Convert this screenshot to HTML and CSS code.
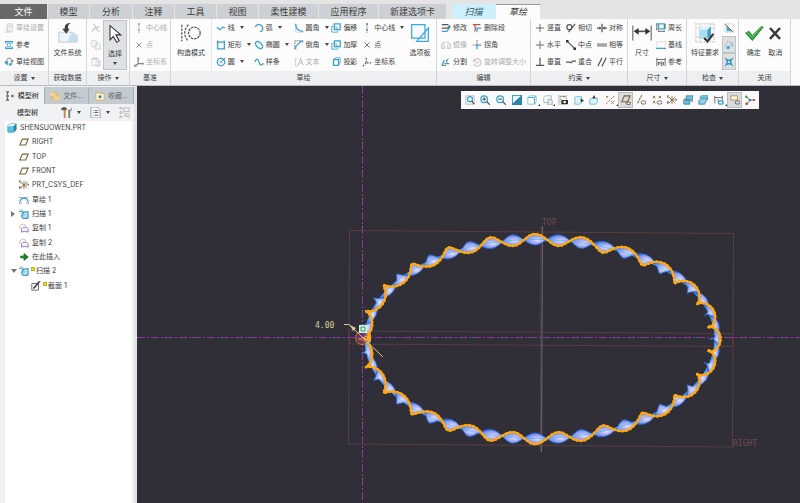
FILE: index.html
```html
<!DOCTYPE html>
<html lang="zh-CN">
<head>
<meta charset="utf-8">
<title>SHENSUOWEN.PRT</title>
<link rel="stylesheet" href="styles.css">
</head>
<body>
<svg class="defs" aria-hidden="true">
  <symbol id="gear-doc" viewBox="0 0 12 12"><path class="g" d="M4 1h6v9H4zM5 3h4M5 5h4"/><path class="g" d="M1 7l3 3 3-3M1 11h7"/></symbol>
  <symbol id="ref" viewBox="0 0 12 12"><path class="b w2" d="M2 4V2h8v2M2 8v2h8V8"/><path class="b" d="M4 4h4v4H4z"/></symbol>
  <symbol id="sketchview" viewBox="0 0 12 12"><path class="fb" d="M1 5l4-1v6l-4-2zM6 8l4-2v3l-4 2z"/><path class="k" d="M3 3c3-3 7-1 7 2M8 4l2 2 1-2"/></symbol>
  <symbol id="cut" viewBox="0 0 12 12"><path class="g w2" d="M3 1l5 8M10 4L2 8"/><circle class="g" cx="9" cy="10" r="1"/><circle class="g" cx="2" cy="9" r="1"/></symbol>
  <symbol id="copy" viewBox="0 0 12 12"><path class="g" d="M1 1h5l1 1v6H1zM5 4h4l2 2v5H5z"/></symbol>
  <symbol id="paste" viewBox="0 0 12 12"><path class="g" d="M1 2h8v8H1zM3 1h4v2H3zM6 5h5v6H6z"/></symbol>
  <symbol id="cl" viewBox="0 0 12 12"><path class="k w2" stroke-dasharray="3 1.500 1 1.500" d="M6 0v12"/></symbol>
  <symbol id="pt" viewBox="0 0 12 12"><path class="k" d="M3 3l6 6M9 3l-6 6"/></symbol>
  <symbol id="csys" viewBox="0 0 12 12"><path class="k w2" d="M5 1v7h6M5 8l-4 3M4 2l1-1 1 1M10 7l1 1-1 1M1 9v2h2"/></symbol>
  <symbol id="csysd" viewBox="0 0 12 12"><path class="k w2" stroke-dasharray="2 1.500" d="M5 1v6h6M5 7l-4 4"/></symbol>
  <symbol id="line" viewBox="0 0 12 12"><path class="b w2" d="M1 5l4 3 3-3 3 1"/></symbol>
  <symbol id="rect" viewBox="0 0 12 12"><path class="b w2" d="M2 2.500h8v8H2z"/><path class="k" d="M1 1.500h2M9 1.500h2"/></symbol>
  <symbol id="circ" viewBox="0 0 12 12"><circle class="b w2" cx="6" cy="6" r="4.500"/><circle class="b" cx="6" cy="6" r="1"/><path class="k" d="M7 5l4-4"/></symbol>
  <symbol id="arc" viewBox="0 0 12 12"><path class="b w2" d="M2 3c6-3 11 2 7 7"/><path class="k" d="M1 4h2M7 10h2"/></symbol>
  <symbol id="ellipse" viewBox="0 0 12 12"><ellipse class="b w2" cx="6" cy="6" rx="5" ry="3" transform="rotate(45 6 6)"/></symbol>
  <symbol id="spline" viewBox="0 0 12 12"><path class="b w2" d="M1 6c2-5 4-4 5 0s4 5 5 1"/></symbol>
  <symbol id="fillet" viewBox="0 0 12 12"><path class="g" stroke-dasharray="2 1" d="M2 1v10h9"/><path class="b w2" d="M2 1c0 6 3 9 9 9"/></symbol>
  <symbol id="chamfer" viewBox="0 0 12 12"><path class="k" stroke-dasharray="2 1" d="M1 11V1h10"/><path class="b w2" d="M2 11V8l6-6h3"/></symbol>
  <symbol id="text" viewBox="0 0 12 12"><path class="g" d="M2 2v9h3M4 2h-3"/><path class="g w2" d="M5 10l3-8 3 8M6 7h4"/></symbol>
  <symbol id="offset" viewBox="0 0 12 12"><path class="b w2" d="M4 1h7v7H4z"/><path class="b" d="M3 4H1v7h7V9M6 4v2h2"/></symbol>
  <symbol id="project" viewBox="0 0 12 12"><path class="b w2" d="M3 3h6v7H3z"/><path class="b" d="M3 3l2-2h6v6L9 10"/></symbol>
  <symbol id="modify" viewBox="0 0 12 12"><path class="k w2" d="M1 2h8M1 6h7l3-3"/><path class="b w2" d="M1 10h6l4-5"/></symbol>
  <symbol id="mirror" viewBox="0 0 12 12"><path class="g w2" d="M5 2L1 5v5h3V6M7 2l4 3v5H8V6"/></symbol>
  <symbol id="split" viewBox="0 0 12 12"><path class="b w2" d="M1 10l3-6M4 8h6"/><path class="k" d="M1 10h5M6 5l3-3M7 4v3"/></symbol>
  <symbol id="delseg" viewBox="0 0 12 12"><path class="r w2" d="M1 2h9M4 1C1 5 7 5 3 10"/><path class="b w2" d="M6 11V6h5"/></symbol>
  <symbol id="corner" viewBox="0 0 12 12"><path class="b w2" d="M6 11V6h5"/><path class="k" stroke-dasharray="2 1" d="M6 0v6H0"/></symbol>
  <symbol id="rotate" viewBox="0 0 12 12"><path class="g w2" d="M2 2v3h3M2 5a4.500 4.500 0 1 1 0 3M5 8l3-3"/></symbol>
  <symbol id="plus" viewBox="0 0 12 12"><path class="k" d="M6 1v10M1 6h10"/></symbol>
  <symbol id="perp" viewBox="0 0 12 12"><path class="k w2" d="M1 10h10M6 1v9"/></symbol>
  <symbol id="tangent" viewBox="0 0 12 12"><circle class="k w2" cx="4" cy="5" r="3"/><path class="k w2" d="M3 11l8-10"/></symbol>
  <symbol id="midpt" viewBox="0 0 12 12"><path class="k w2" d="M1 1l10 10"/><path class="fk" d="M0 0h3v3H0zM9 9h3v3H9z"/></symbol>
  <symbol id="coin" viewBox="0 0 12 12"><path class="k w2" d="M0 6h4l2 1 2-2h4"/></symbol>
  <symbol id="symm" viewBox="0 0 12 12"><path class="k w2" d="M6 1v10M0 6h4M8 6h4"/><path class="fk" d="M3 4l2 2-2 2zM9 4L7 6l2 2z"/></symbol>
  <symbol id="equal" viewBox="0 0 12 12"><path d="M0 4h12v4H0z" fill="#999"/><path class="g" d="M0 6h12"/></symbol>
  <symbol id="para" viewBox="0 0 12 12"><path class="k w2" d="M1 11L6 1M6 11l5-10"/></symbol>
  <symbol id="perim" viewBox="0 0 12 12"><path class="b w2" d="M3 1h7v6H3z"/><path class="k" d="M1 1v7M0 1h2M0 8h2M3 10h7M3 9v2M10 9v2M11 1v6"/></symbol>
  <symbol id="base" viewBox="0 0 12 12"><path class="g" stroke-dasharray="1 1" d="M1 8V2h10v6"/><path class="b w2" d="M0 10h12"/></symbol>
  <symbol id="refdim" viewBox="0 0 12 12"><path class="k" d="M1 1v10M11 1v10M1 3h10M3 6v4M3 6h1v2M6 6h2M6 6v4h2M6 8h2M9 6v4"/></symbol>
  <symbol id="chk1" viewBox="0 0 12 12"><path class="g" stroke-dasharray="1 1" d="M1 1h10v10H1z"/><path class="fb" d="M3 3v7h7z"/><path class="k" d="M1 1l10 10"/></symbol>
  <symbol id="chk2" viewBox="0 0 12 12"><path class="k" stroke-dasharray="1 2" d="M1 7l3-5 6 1 1 5"/><circle cx="5" cy="9" r="2" fill="#39a9d6"/><circle cx="9" cy="6" r="1.500" fill="#7cc6e4"/></symbol>
  <symbol id="chk3" viewBox="0 0 12 12"><path class="k" d="M1 1l3 3M11 1L8 4M1 11l3-3M11 11L8 8"/><path d="M3 3l3 1 3-1-1 3 1 3-3-1-3 1 1-3z" fill="#a9dcf3" stroke="#2b8fbb" stroke-width="1.500"/></symbol>
  <symbol id="doc-in" viewBox="0 0 24 24"><path d="M1 11h16l6 4v8H1z" fill="#eef5fa" stroke="#b9c3cb"/><path d="M17 11l6 6v6H11z" fill="#c5deee"/><path d="M15 0c-6 0-7 3-7 7H5l5 6 4-6h-2c0-3 0-5 3-7z" fill="#3d4145"/></symbol>
  <symbol id="cursor" viewBox="0 0 24 24"><path d="M6 2v17l4-4 4 7 3-2-4-7h6z" fill="#fff" stroke="#333" stroke-width="1.300"/></symbol>
  <symbol id="constr" viewBox="0 0 24 24"><path class="k" stroke-width="1.500" stroke-dasharray="3 1.500" d="M1 2v20M9 2c-6 6-6 14 0 20"/><circle class="k" stroke-width="1.500" stroke-dasharray="3 1" cx="16" cy="12" r="7"/></symbol>
  <symbol id="palette" viewBox="0 0 24 24"><path d="M2 2h16v16H2zM22 6v16H8z" fill="#f5fbfe" stroke="#41a8dc" stroke-width="1.500"/></symbol>
  <symbol id="dim" viewBox="0 0 24 24"><path class="k" stroke-width="1.200" d="M1 3v18M23 3v18"/><path class="k" stroke-width="2" d="M4 10h16"/><path class="fk" d="M2 10l6-4v8zM22 10l-6-4v8z"/></symbol>
  <symbol id="feature" viewBox="0 0 24 24"><path class="g" stroke-dasharray="1 1.500" stroke-width="1.500" d="M1 1h22v22H1zM1 6h22M6 1v22M1 17h22M18 1v22"/><path d="M5 8l4-4h10v11l-4 4H5z" fill="#a9dcf3"/><path d="M15 8v11l4-4V4z" fill="#3e9cc6"/><path d="M5 8l4-4h10l-4 4z" fill="#e4f7ff"/><path d="M11 18l4 4 7-9" fill="none" stroke="#333" stroke-width="2.500"/></symbol>
  <symbol id="ok" viewBox="0 0 24 24"><path d="M2 12l4-2 4 5L21 4l2 1-13 16z" fill="#2fa34a" stroke="#1f7b35"/><path d="M4 11l6 6L21 5" fill="none" stroke="#7fd13d"/></symbol>
  <symbol id="cancel" viewBox="0 0 24 24"><path d="M6 6l12 13M18 6L6 19" fill="none" stroke="#3a3d40" stroke-width="3"/></symbol>
  <symbol id="treeico" viewBox="0 0 12 12"><path class="k" d="M2 0h2v2H2zM2 5h2v2H2zM2 10h2v2H2zM8 5h2v2H8zM3 2v3M3 7v3"/></symbol>
  <symbol id="folders" viewBox="0 0 12 12"><path d="M0 1h3l1 1h4v5H0zM2 3h3l1 1h4v5H2zM4 5h3l1 1h4v5H4z" fill="#fff3d2" stroke="#d9a648" stroke-width=".8"/></symbol>
  <symbol id="fav" viewBox="0 0 12 12"><path d="M1 2h4l1 1h5v8H1z" fill="#fff3d2" stroke="#d9a648"/><circle cx="6" cy="7" r="1.800" fill="#2a87b5"/></symbol>
  <symbol id="tools" viewBox="0 0 12 12"><path d="M0 3c1-3 4-3 6-2v3H5v8H3V4z" fill="#b88a4b"/><path d="M0 3c1-3 4-3 6-2v2z" fill="#555"/><path d="M8 0v3h3V0l1 3-2 2v7H8V5z" fill="#6f767b"/></symbol>
  <symbol id="list" viewBox="0 0 12 12"><path d="M1 0h7l3 3v9H1z" fill="#fff" stroke="#8c949a"/><path class="b" d="M3 4h1M3 6h1M3 9h1"/><path class="k" d="M5 4h4M5 6h4M5 9h4"/></symbol>
  <symbol id="treehide" viewBox="0 0 12 12"><path class="g" d="M1 0h2v2H1zM1 5h2v2H1zM1 10h2v2H1zM5 1h6v4H5zM5 6l6 6M6 9c2-3 4-2 6 0-2 2-4 2-6 0"/></symbol>
  <symbol id="part" viewBox="0 0 12 12"><path d="M1 3l3-2h7v7l-3 3H1z" fill="#5fc3e8" stroke="#3489ad" stroke-width=".8"/><path d="M1 3l3-2h7L8 4H1z" fill="#dff5fc"/><path d="M8 4l3-3v7l-3 3z" fill="#2c83a8"/></symbol>
  <symbol id="plane" viewBox="0 0 12 12"><path d="M4 2.500h7l-3 7H1z" fill="none" stroke="#7d6237" stroke-width="1.300"/></symbol>
  <symbol id="csystree" viewBox="0 0 12 12"><path d="M2 2l8 8M10 2l-8 8M4 6h8M6 1v10" stroke="#8a6a35"/><path class="k" d="M0 1h2M0 1l2 3M1 7v4M0 9h2M10 4l2 2"/></symbol>
  <symbol id="sketch" viewBox="0 0 12 12"><path class="b w2" d="M1 9c1-7 9-7 10 0"/><path class="k" stroke-dasharray="1 1" d="M0 3h12M0 10h3M9 10h3"/></symbol>
  <symbol id="sweep" viewBox="0 0 12 12"><path d="M4 4l7-1v8l-6 1-2-3z" fill="#8bd2ee" stroke="#2c83a8"/><path class="b" d="M1 1c3 0 5 2 5 6M0 3h4"/><path d="M6 6l4-1M6 9l4-1" stroke="#e4f7ff"/></symbol>
  <symbol id="copyf" viewBox="0 0 12 12"><path d="M1 7c-2-5 6-8 7-3" fill="none" stroke="#aaa"/><path d="M3 11V8c0-4 8-4 8 0v3c-1-1-7-1-8 0z" fill="#fbf3ff" stroke="#8c62b5"/></symbol>
  <symbol id="insert" viewBox="0 0 12 12"><path d="M2 5h4V2l5 4-5 4V7H2z" fill="#1b8a1b" stroke="#126112"/></symbol>
  <symbol id="section" viewBox="0 0 12 12"><path class="k" d="M1 3h8v8H1z"/><path d="M3 9l7-8" stroke="#333" stroke-width="1.800"/><path d="M10 1l1-1" stroke="#c33" stroke-width="2"/></symbol>
  <symbol id="zfit" viewBox="0 0 12 12"><path class="g" d="M1 1h10v10H1z"/><circle class="b w2" cx="6" cy="5" r="3"/><path class="k w2" d="M8 7l3 4"/></symbol>
  <symbol id="zin" viewBox="0 0 12 12"><circle class="b w2" cx="5" cy="5" r="4"/><path class="k w2" d="M8 8l4 4M3 5h4M5 3v4"/></symbol>
  <symbol id="zout" viewBox="0 0 12 12"><circle class="b w2" cx="5" cy="5" r="4"/><path class="k w2" d="M8 8l4 4M3 5h4"/></symbol>
  <symbol id="repaint" viewBox="0 0 12 12"><path d="M0 0h12v12H0z" fill="#2d83a9"/><path d="M1 1h10L1 10z" fill="#e8f4f9"/></symbol>
  <symbol id="cube" viewBox="0 0 12 12"><path d="M1 3l2-2h8v7l-2 3H1z" fill="#fff" stroke="#7dbcd8"/><path class="b" d="M1 3h8v8M9 3l2-2"/></symbol>
  <symbol id="views" viewBox="0 0 12 12"><path d="M1 3l2-2h7v8H1z" fill="#fff" stroke="#7dbcd8"/><path d="M6 5h3l2 2v5H6z" fill="#eee" stroke="#999"/></symbol>
  <symbol id="camera" viewBox="0 0 12 12"><path class="g" d="M1 0h9v11H1z"/><path class="k" d="M2 2h2M2 5h2M2 8h1M5 2h4"/><path class="fk" d="M4 6h8v5H4z"/><circle cx="8" cy="8.500" r="1.500" fill="#fff"/></symbol>
  <symbol id="cubearrow" viewBox="0 0 12 12"><path d="M1 3l2-1h6v7l-2 2H1z" fill="#dff5fc" stroke="#5fb0d2"/><path class="fk" d="M8 4l4 3-4 2z"/></symbol>
  <symbol id="cubeup" viewBox="0 0 12 12"><path d="M1 5l2-1h7v5l-2 2H1z" fill="#dff5fc" stroke="#5fb0d2"/><path class="fk" d="M4 4l2-4 2 4z"/></symbol>
  <symbol id="datums" viewBox="0 0 12 12"><path d="M1 11L11 1M1 1l3 3M4 1L1 4M7 7l4 4M11 7l-4 4" fill="none" stroke="#8a6a35" stroke-dasharray="3 1"/></symbol>
  <symbol id="planeye" viewBox="0 0 12 12"><path d="M4 1h7L8 8H1z" fill="none" stroke="#80642e" stroke-width="1.300"/><ellipse class="k" cx="9" cy="10" rx="3" ry="1.500"/></symbol>
  <symbol id="axiseye" viewBox="0 0 12 12"><path d="M2 10L7 0" stroke="#80642e" stroke-width="1.300" stroke-dasharray="3 1"/><ellipse class="k" cx="9" cy="9" rx="3" ry="2"/></symbol>
  <symbol id="pteye" viewBox="0 0 12 12"><path d="M1 1l3 3M4 1L1 4M8 1l3 3M11 1L8 4M1 7l3 3M4 7l-3 3" stroke="#80642e"/><ellipse class="k" cx="9" cy="9" rx="3" ry="2"/></symbol>
  <symbol id="annot" viewBox="0 0 12 12"><path d="M4 1h8v5H4zM1 6h7v5H1z" fill="#72bfdd" stroke="#3183a8"/><path class="k" d="M1 4l3 2M9 7l3 1"/></symbol>
  <symbol id="layers" viewBox="0 0 12 12"><path d="M1 7l3-3h7L8 11H1zM2 4l2-3h8v5" fill="#8ed0e9" stroke="#3183a8"/></symbol>
  <symbol id="dimeye" viewBox="0 0 12 12"><path class="k" d="M1 1v9M10 1v6M1 3h9M4 5l3 3"/><ellipse class="b w2" cx="8" cy="9" rx="3" ry="2"/></symbol>
  <symbol id="spin" viewBox="0 0 12 12"><path d="M1 1h8v5H1z" fill="#fff8d8" stroke="#a58a4c"/><ellipse class="k" cx="9" cy="9" rx="3" ry="2"/></symbol>
  <symbol id="triad" viewBox="0 0 12 12"><path class="k" d="M1 2l5 4h5M6 6l-4 5"/><circle cx="1.500" cy="2" r="1.500" fill="#3a9b45"/><circle cx="11" cy="6" r="1.300" fill="#c33"/><circle cx="2" cy="10.500" r="1.500" fill="#c33"/><circle cx="6" cy="6" r="1.500" fill="#2a87b5"/></symbol>
</svg>

<nav class="tabs">
  <button class="tab file">文件</button>
  <button class="tab">模型</button>
  <button class="tab">分析</button>
  <button class="tab">注释</button>
  <button class="tab">工具</button>
  <button class="tab">视图</button>
  <button class="tab">柔性建模</button>
  <button class="tab">应用程序</button>
  <button class="tab">新建选项卡</button>
  <button class="tab context">扫描</button>
  <button class="tab current">草绘</button>
</nav>

<header class="ribbon">
  <section class="group">
    <div class="body">
      <div class="col">
        <button class="cmd" disabled><svg><use href="#gear-doc"/></svg>草绘设置</button>
        <button class="cmd"><svg><use href="#ref"/></svg>参考</button>
        <button class="cmd"><svg><use href="#sketchview"/></svg>草绘视图</button>
      </div>
    </div>
    <h2 class="drop">设置</h2>
  </section>
  <section class="group">
    <div class="body center"><button class="big"><svg><use href="#doc-in"/></svg>文件系统</button></div>
    <h2>获取数据</h2>
  </section>
  <section class="group">
    <div class="body edge-right">
      <div class="col">
        <button class="cmd" disabled aria-label="剪切"><svg><use href="#cut"/></svg></button>
        <button class="cmd" disabled aria-label="复制"><svg><use href="#copy"/></svg></button>
        <button class="cmd" disabled aria-label="粘贴"><svg><use href="#paste"/></svg></button>
      </div>
      <button class="big select"><svg><use href="#cursor"/></svg><span class="drop">选择</span></button>
    </div>
    <h2 class="drop">操作</h2>
  </section>
  <section class="group">
    <div class="body">
      <div class="col">
        <button class="cmd" disabled><svg><use href="#cl"/></svg>中心线</button>
        <button class="cmd" disabled><svg><use href="#pt"/></svg>点</button>
        <button class="cmd" disabled><svg><use href="#csys"/></svg>坐标系</button>
      </div>
    </div>
    <h2>基准</h2>
  </section>
  <section class="group">
    <div class="body draw">
      <button class="big"><svg><use href="#constr"/></svg>构造模式</button>
      <div class="col ruled">
        <button class="cmd drop"><svg><use href="#line"/></svg>线</button>
        <button class="cmd drop"><svg><use href="#rect"/></svg>矩形</button>
        <button class="cmd drop"><svg><use href="#circ"/></svg>圆</button>
      </div>
      <div class="col">
        <button class="cmd drop"><svg><use href="#arc"/></svg>弧</button>
        <button class="cmd drop"><svg><use href="#ellipse"/></svg>椭圆</button>
        <button class="cmd"><svg><use href="#spline"/></svg>样条</button>
      </div>
      <div class="col">
        <button class="cmd drop"><svg><use href="#fillet"/></svg>圆角</button>
        <button class="cmd drop"><svg><use href="#chamfer"/></svg>倒角</button>
        <button class="cmd" disabled><svg><use href="#text"/></svg>文本</button>
      </div>
      <div class="col">
        <button class="cmd"><svg><use href="#offset"/></svg>偏移</button>
        <button class="cmd"><svg><use href="#offset"/></svg>加厚</button>
        <button class="cmd"><svg><use href="#project"/></svg>投影</button>
      </div>
      <div class="col">
        <button class="cmd drop"><svg><use href="#cl"/></svg>中心线</button>
        <button class="cmd"><svg><use href="#pt"/></svg>点</button>
        <button class="cmd"><svg><use href="#csysd"/></svg>坐标系</button>
      </div>
      <button class="big"><svg><use href="#palette"/></svg>选项板</button>
    </div>
    <h2>草绘</h2>
  </section>
  <section class="group">
    <div class="body">
      <div class="col">
        <button class="cmd"><svg><use href="#modify"/></svg>修改</button>
        <button class="cmd" disabled><svg><use href="#mirror"/></svg>镜像</button>
        <button class="cmd"><svg><use href="#split"/></svg>分割</button>
      </div>
      <div class="col">
        <button class="cmd"><svg><use href="#delseg"/></svg>删除段</button>
        <button class="cmd"><svg><use href="#corner"/></svg>拐角</button>
        <button class="cmd" disabled><svg><use href="#rotate"/></svg>旋转调整大小</button>
      </div>
    </div>
    <h2>编辑</h2>
  </section>
  <section class="group">
    <div class="body">
      <div class="col">
        <button class="cmd"><svg><use href="#plus"/></svg>竖直</button>
        <button class="cmd"><svg><use href="#plus"/></svg>水平</button>
        <button class="cmd"><svg><use href="#perp"/></svg>垂直</button>
      </div>
      <div class="col">
        <button class="cmd"><svg><use href="#tangent"/></svg>相切</button>
        <button class="cmd"><svg><use href="#midpt"/></svg>中点</button>
        <button class="cmd"><svg><use href="#coin"/></svg>重合</button>
      </div>
      <div class="col">
        <button class="cmd"><svg><use href="#symm"/></svg>对称</button>
        <button class="cmd"><svg><use href="#equal"/></svg>相等</button>
        <button class="cmd"><svg><use href="#para"/></svg>平行</button>
      </div>
    </div>
    <h2 class="drop">约束</h2>
  </section>
  <section class="group">
    <div class="body">
      <button class="big"><svg><use href="#dim"/></svg>尺寸</button>
      <div class="col">
        <button class="cmd"><svg><use href="#perim"/></svg>周长</button>
        <button class="cmd"><svg><use href="#base"/></svg>基线</button>
        <button class="cmd"><svg><use href="#refdim"/></svg>参考</button>
      </div>
    </div>
    <h2 class="drop">尺寸</h2>
  </section>
  <section class="group">
    <div class="body edge-right">
      <button class="big"><svg><use href="#feature"/></svg>特征要求</button>
      <div class="col">
        <button class="cmd toggle" aria-label="着色封闭环"><svg><use href="#chk1"/></svg></button>
        <button class="cmd toggle on" aria-label="突出显示开放端"><svg><use href="#chk2"/></svg></button>
        <button class="cmd toggle on" aria-label="重叠几何"><svg><use href="#chk3"/></svg></button>
      </div>
    </div>
    <h2 class="drop">检查</h2>
  </section>
  <section class="group">
    <div class="body close">
      <button class="big"><svg><use href="#ok"/></svg>确定</button>
      <button class="big"><svg><use href="#cancel"/></svg>取消</button>
    </div>
    <h2>关闭</h2>
  </section>
</header>

<main class="work">
  <aside class="side">
    <nav class="side-tabs">
      <button class="on"><svg><use href="#treeico"/></svg>模型树</button>
      <button><svg><use href="#folders"/></svg>文件...</button>
      <button><svg><use href="#fav"/></svg>收藏...</button>
    </nav>
    <div class="side-head">
      <h3>模型树</h3>
      <button class="drop" aria-label="设置"><svg><use href="#tools"/></svg></button>
      <button class="drop" aria-label="显示"><svg><use href="#list"/></svg></button>
      <button aria-label="隐藏"><svg><use href="#treehide"/></svg></button>
    </div>
    <div class="tree-pane">
      <ul class="tree">
        <li class="root"><svg><use href="#part"/></svg>SHENSUOWEN.PRT</li>
        <li><svg><use href="#plane"/></svg>RIGHT</li>
        <li><svg><use href="#plane"/></svg>TOP</li>
        <li><svg><use href="#plane"/></svg>FRONT</li>
        <li><svg><use href="#csystree"/></svg>PRT_CSYS_DEF</li>
        <li><svg><use href="#sketch"/></svg>草绘 1</li>
        <li class="closed"><svg><use href="#sweep"/></svg>扫描 1</li>
        <li><svg><use href="#copyf"/></svg>复制 1</li>
        <li><svg><use href="#copyf"/></svg>复制 2</li>
        <li><svg><use href="#insert"/></svg>在此插入</li>
        <li class="open"><svg><use href="#sweep"/></svg><i class="flag"></i>扫描 2</li>
        <li class="child"><svg><use href="#section"/></svg><i class="flag"></i>截面 1</li>
      </ul>
    </div>
  </aside>

  <div class="canvas">
    <svg class="scene" viewBox="137 86 663 417" preserveAspectRatio="xMidYMid slice" role="img" aria-label="模型视图">
      <defs>
        <radialGradient id="sheen" cx=".58" cy=".55" r=".6">
          <stop offset="0" stop-color="#e6e4ff"/>
          <stop offset=".35" stop-color="#b3b4f6"/>
          <stop offset=".7" stop-color="#7c97ee"/>
          <stop offset="1" stop-color="#2460d6"/>
        </radialGradient>
      </defs>
      <g class="planes">
        <path d="M349.500 230.500L733.500 233.500L732.500 447L348.500 444z"/>
        <path d="M349 331L733 333.500V346.500L349 344z"/>
        <path d="M541 226L540.500 452"/>
      </g>
      <path class="edge" d="M542.500 226L541.500 452"/>
      <text class="plane-name" x="542" y="225">TOP</text>
      <text class="plane-name" x="733" y="446">RIGHT</text>
      <path class="axis" d="M362.500 86V503M137 337.500H800"/>
      <path class="axis-dot" d="M362.500 86V503M137 337.500H800"/>
      <g id="ribbon"></g>
      <circle cx="362" cy="338" r="6.500" fill="#7a3c6b" fill-opacity=".6" stroke="#d87824"/>
      <path d="M361 338l10-4v8z" fill="#ffa815"/>
      <path class="axis" d="M355 337.500h14M362.500 331v14"/>
      <path class="leader" d="M344 324.500h5L383 357"/>
      <path d="M350 325l6 3-3 3z" fill="#d6cf9c"/>
      <path d="M359 325h8v8h-8z" fill="#dff0d2"/>
      <path d="M361 327h4v4h-4z" fill="none" stroke="#2e9a86"/>
      <text class="dim" x="315" y="328">4.00</text>
    </svg>
    <div class="viewbar">
      <button aria-label="重新调整"><svg><use href="#zfit"/></svg></button>
      <button aria-label="放大"><svg><use href="#zin"/></svg></button>
      <button aria-label="缩小"><svg><use href="#zout"/></svg></button>
      <button aria-label="重画"><svg><use href="#repaint"/></svg></button>
      <button class="more" aria-label="显示样式"><svg><use href="#cube"/></svg></button>
      <button class="more" aria-label="已保存方向"><svg><use href="#views"/></svg></button>
      <button aria-label="视图管理器"><svg><use href="#camera"/></svg></button>
      <button aria-label="草绘视图"><svg><use href="#cubearrow"/></svg></button>
      <button aria-label="修剪模型"><svg><use href="#cubeup"/></svg></button>
      <button class="more" aria-label="基准显示"><svg><use href="#datums"/></svg></button>
      <button class="on" aria-label="平面显示"><svg><use href="#planeye"/></svg></button>
      <button aria-label="轴显示"><svg><use href="#axiseye"/></svg></button>
      <button aria-label="点显示"><svg><use href="#pteye"/></svg></button>
      <button aria-label="坐标系显示"><svg><use href="#csystree"/></svg></button>
      <button aria-label="注释显示"><svg><use href="#annot"/></svg></button>
      <button aria-label="图层"><svg><use href="#layers"/></svg></button>
      <button class="more" aria-label="草绘显示"><svg><use href="#dimeye"/></svg></button>
      <button class="on" aria-label="标签显示"><svg><use href="#spin"/></svg></button>
      <button aria-label="旋转中心"><svg><use href="#triad"/></svg></button>
    </div>
  </div>
</main>
<script src="model.js"></script>
</body>
</html>
```
FILE: styles.css
```css
* { box-sizing: border-box; }
body {
  margin: 0;
  height: 100vh;
  display: flex;
  flex-direction: column;
  background: #e4e4e4;
  color: #3c3c3c;
  font: 7px/12px "Open Sans", "Noto Sans CJK SC", sans-serif;
  overflow: hidden;
}
button {
  margin: 0;
  padding: 0;
  border: 0;
  background: none;
  font: inherit;
  color: inherit;
  white-space: nowrap;
}
svg { flex: none; overflow: visible; }
.defs { position: absolute; width: 0; height: 0; }
.k, .b, .g, .r { fill: none; stroke: #555; }
.b { stroke: #35a0d2; }
.g { stroke: #b4b6b8; }
.r { stroke: #c0504a; }
.w2 { stroke-width: 1.500; }
.fk { fill: #333; }
.fb { fill: #4ba9d0; }

.drop::after {
  content: "";
  border: 2px solid transparent;
  border-top: 3px solid #444;
  border-bottom: 0;
}

/* Ribbon tabs */
.tabs {
  display: grid;
  grid-template-columns: 48fr 42fr 43fr 42fr 42fr 42fr 60fr 60fr 68fr 5fr 44fr 45fr 259fr;
  padding-top: 4px;
  flex: none;
}
.tab {
  height: 15px;
  background: #cdd1d4;
  border-right: 1px solid #e4e4e4;
  font-size: 9px;
  line-height: 14px;
}
.tab.file { background: #686868; color: #fff; }
.tab.context { grid-column: 11; background: #cdf0fd; font-style: italic; color: #2c5363; }
.tab.current { background: #fcfcfc; border-top: 1px solid #999; font-style: italic; }

/* Ribbon groups */
.ribbon {
  display: grid;
  grid-template-columns: 49fr 38fr 43fr 41fr 266fr 94fr 97fr 59fr 52fr 52fr 9fr;
  background: #fcfcfc;
  border-bottom: 1px solid #b9bbbd;
  flex: none;
}
.group { border-right: 1px solid #d2d4d6; min-width: 0; }
.body {
  display: flex;
  justify-content: space-between;
  height: 52px;
  padding: 0 4px;
}
.body.center { justify-content: center; }
.body.close { justify-content: space-around; }
.body.edge-right { padding-right: 2px; }
.group h2 {
  display: flex;
  align-items: center;
  justify-content: center;
  gap: 3px;
  height: 14px;
  margin: 0;
  background: #edeff1;
  font-size: 7px;
  font-weight: 400;
}
.col { display: grid; grid-auto-rows: 17px; }
.ruled { border-left: 1px solid #e6e6e6; padding-left: 4px; }
.body.draw {
  display: grid;
  grid-template-columns: 40fr 43fr 40fr 38fr 31fr 46fr 24fr;
  padding-left: 0;
}
.cmd { display: flex; align-items: center; gap: 2px; }
.cmd svg { width: 10px; height: 10px; }
.cmd.drop::after { margin-left: 3px; }
.cmd:disabled { color: #aaacae; }
.cmd:disabled svg { opacity: 0.7; }
.big {
  display: flex;
  flex-direction: column;
  align-items: center;
  gap: 4px;
  padding-top: 4px;
}
.big svg { width: 20px; height: 20px; }
.select {
  width: 24px;
  height: 50px;
  padding-top: 3px;
  margin-top: 1px;
  background: #dfe2e5;
  border: 1px solid #bfc3c6;
}
.select span {
  display: flex;
  flex-direction: column;
  align-items: center;
  gap: 2px;
}
.toggle { width: 14px; justify-content: center; border: 1px solid transparent; }
.toggle.on { background: #dde0e3; border-color: #bfc3c6; }

/* Side panel */
.work { display: flex; flex: 1; min-height: 0; }
.side {
  display: flex;
  flex-direction: column;
  flex: 0 0 137px;
  background: #eff1f2;
  border-right: 3px solid #e2e4e5;
}
.side-tabs { display: grid; grid-template-columns: repeat(3, 1fr); padding-top: 1px; }
.side-tabs button {
  display: flex;
  align-items: center;
  justify-content: center;
  gap: 3px;
  height: 17px;
  background: #c3cad1;
  border-right: 1px solid #a9afb4;
  color: #666;
}
.side-tabs .on { background: #eff1f2; color: #222; }
.side svg { width: 10px; height: 10px; }
.side-head {
  display: flex;
  align-items: center;
  gap: 9px;
  height: 17px;
  padding: 0 4px 0 17px;
}
.side-head h3 { margin: 0; flex: 1; font-size: 7px; font-weight: 500; }
.side-head button { display: flex; align-items: center; gap: 5px; }
.side-head svg { width: 11px; height: 11px; }
.tree-pane { flex: 1; margin: 0 2px 0 5px; background: #fff; }
.tree {
  display: grid;
  grid-template-rows: repeat(12, 1fr);
  height: 172px;
  margin: 0;
  padding: 0;
  list-style: none;
  font-family: Inter, "Noto Sans CJK SC", sans-serif;
}
.tree li {
  display: flex;
  align-items: center;
  gap: 3px;
  padding-left: 14px;
  position: relative;
}
.tree .root { padding-left: 2px; }
.tree .child { padding-left: 26px; }
.closed::before, .open::before {
  content: "";
  position: absolute;
  left: 6px;
  border: 3px solid transparent;
  border-left: 4px solid #777;
  border-right: 0;
}
.open::before {
  border: 3px solid transparent;
  border-top: 4px solid #777;
  border-bottom: 0;
}
.flag {
  align-self: flex-start;
  width: 4px;
  height: 4px;
  margin: 3px -2px 0 -1px;
  background: #e8e010;
  border: 1px solid #b8ae30;
}

/* Graphics window */
.canvas { position: relative; flex: 1; min-width: 0; background: #302f37; }
.scene { display: block; width: 100%; height: 100%; overflow: hidden; }
.planes path { fill: none; stroke: #5b3c43; }
.edge { fill: none; stroke: #68666f; }
.plane-name { font: 8px "DejaVu Sans Mono", monospace; fill: #704a52; }
.axis { fill: none; stroke: #8f32a3; stroke-dasharray: 8 2 2 2; }
.axis-dot { fill: none; stroke: #5e8f9c; stroke-dasharray: 1 27; }
.leader { fill: none; stroke: #cfc894; }
.dim { font: 8px "DejaVu Sans Mono", monospace; fill: #d6cf9c; }
.lens { fill: url(#sheen); stroke: #2b66da; stroke-width: 1; }
.spine { fill: none; stroke: #44b4f2; stroke-width: 0.700; }
.strand { fill: none; stroke: #ffa80f; stroke-width: 2; stroke-linejoin: round; }
.beads { fill: none; stroke: #ffa80f; stroke-width: 3; stroke-linecap: round; stroke-dasharray: 0 4; }
.viewbar {
  position: absolute;
  top: 5px;
  right: 41px;
  width: 298px;
  height: 18px;
  display: grid;
  grid-template-columns: repeat(19, 1fr);
  padding: 1px;
  background: #fafafa;
}
.viewbar button { display: grid; place-items: center; position: relative; }
.viewbar svg { width: 10px; height: 10px; }
.viewbar .on { background: #d9dcdf; border: 1px solid #b9bdc1; }
.more::after {
  content: "";
  position: absolute;
  right: 0;
  bottom: 2px;
  border-left: 2px solid transparent;
  border-bottom: 2px solid #333;
}
```
FILE: model.js
```js
// Twisted ribbon swept along an ellipse, 24 turns per revolution.
const TURNS = 24;
const CX = 535, CY = 339, RY = 99.5, R = 5.5;

function spine(t) {
  const rx = Math.cos(t) > 0 ? 170 : 180;
  return [CX - rx * Math.cos(t), CY - RY * Math.sin(t)];
}

function strand(t, side) {
  const rx = Math.cos(t) > 0 ? 170 : 180;
  const [x, y] = spine(t);
  let tx = rx * Math.sin(t), ty = -RY * Math.cos(t);
  const len = Math.hypot(tx, ty);
  tx /= len;
  ty /= len;
  const a = TURNS * t;
  const n = side * R * Math.cos(a);
  const s = -side * R * 0.9 * Math.cos(t) * Math.sin(a);
  return [x + ty * n + tx * s, y - tx * n + ty * s];
}

function trace(fn, from, to, steps) {
  const pts = [];
  for (let i = 0; i <= steps; i++) {
    pts.push(fn(from + (to - from) * i / steps).map(v => v.toFixed(2)).join(" "));
  }
  return pts.join("L");
}

function add(cls, d) {
  const p = document.createElementNS("http://www.w3.org/2000/svg", "path");
  p.setAttribute("class", cls);
  p.setAttribute("d", d);
  document.getElementById("ribbon").appendChild(p);
}

const half = Math.PI / TURNS;
for (let k = 0; k < TURNS * 2; k++) {
  const a = (k - 0.5) * half, b = a + half;
  add("lens", "M" + trace(t => strand(t, 1), a, b, 14) + "L" + trace(t => strand(t, -1), b, a, 14) + "z");
}
add("spine", "M" + trace(spine, 0, Math.PI * 2, 200));
const path = "M" + trace(t => strand(t, 1), 0, Math.PI * 2, 900);
add("strand", path);
add("beads", path);
```
